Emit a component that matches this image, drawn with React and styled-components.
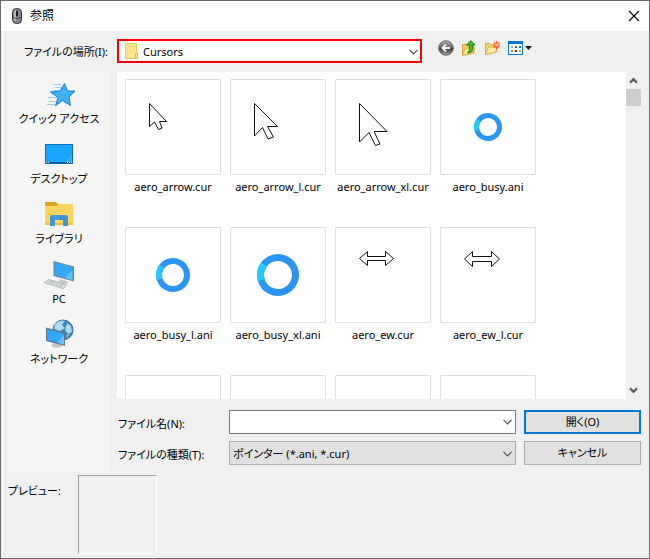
import React, { useState } from "react";
import styled, { createGlobalStyle } from "styled-components";

const GlobalStyle = createGlobalStyle`
  * {
    box-sizing: border-box;
  }

  body {
    margin: 0;
    background-color: #f0f0f0;
  }

  body,
  button,
  input,
  select {
    font-family: "Noto Sans", "Noto Sans CJK JP", sans-serif;
    font-size: 11px;
    font-feature-settings: "palt";
    color: #000;
  }

  svg {
    display: block;
    flex: none;
  }
`;

const Dialog = styled.div`
  display: flex;
  flex-direction: column;
  height: 100vh;
  border: 1px solid #6b696b;
  background-color: #f0f0f0;
  line-height: 16px;
`;

const TitleBar = styled.header`
  display: flex;
  align-items: center;
  gap: 5px;
  height: 30px;
  padding: 0 7px 0 8px;
  background-color: #fff;
`;

const Title = styled.h1`
  flex: 1;
  margin: 0;
  font-size: 12px;
  font-weight: 400;
`;

const IconButton = styled.button`
  display: flex;
  padding: 0;
  border: none;
  background: none;
`;

const Body = styled.main`
  flex: 1;
  min-height: 0;
  display: grid;
  grid-template-columns: 102px minmax(0, 1fr);
  grid-template-rows: 24px minmax(0, 1fr);
  gap: 9px 7px;
  padding: 8px 8px 0 7px;
`;

const LookInLabel = styled.label`
  align-self: center;
  padding: 2px 2px 0 0;
  text-align: right;
  white-space: nowrap;
`;

const LookInRow = styled.div`
  display: flex;
  gap: 16px;
`;

const ComboBox = styled.div`
  position: relative;
  flex: 1;
  display: flex;
  height: 24px;
`;

const Select = styled.select`
  appearance: none;
  width: 100%;
  height: 100%;
  padding: 0 20px 0 ${(props) => (props.$withIcon ? "24px" : "3px")};
  border: ${(props) => (props.$marked ? "2px solid #f00" : "1px solid #adadad")};
  border-radius: 0;
  background-color: ${(props) => (props.$marked ? "#fff" : "#e1e1e1")};
`;

const ComboIcon = styled.span`
  position: absolute;
  top: 4px;
  left: 6px;
  pointer-events: none;
`;

const ComboArrow = styled.span`
  position: absolute;
  top: 10px;
  right: 4px;
  pointer-events: none;
`;

const Toolbar = styled.div`
  display: flex;
  align-items: flex-start;
  gap: 7px;
  width: 203px;
  padding-top: 1px;
`;

const Places = styled.nav`
  display: flex;
  flex-direction: column;
  gap: 12px;
  padding-top: 7px;
  background-color: #f5f5f5;
`;

const Place = styled.button`
  display: flex;
  flex-direction: column;
  align-items: center;
  padding: 0;
  border: none;
  background: none;
  line-height: 16px;
  white-space: nowrap;
`;

const Content = styled.section`
  display: flex;
  flex-direction: column;
  gap: 11px;
  min-height: 0;
  padding-bottom: 6px;
`;

const FileView = styled.div`
  flex: 1;
  min-height: 0;
  display: flex;
`;

const FileGrid = styled.ul`
  flex: 1;
  display: grid;
  grid-template-columns: repeat(auto-fill, 96px);
  grid-auto-rows: 139px;
  gap: 9px;
  margin: 0;
  padding: 7px 8px 0;
  overflow: hidden;
  background-color: #fff;
  list-style: none;
`;

const FileItem = styled.li`
  display: flex;
  flex-direction: column;
  align-items: center;
  gap: 4px;
  white-space: nowrap;
`;

const Thumb = styled.div`
  flex: none;
  width: 96px;
  height: 96px;
  border: 1px solid #dfdfdf;
  border-radius: 1px;
`;

const ScrollBar = styled.div`
  display: flex;
  flex-direction: column;
  width: 15px;
`;

const ScrollButton = styled(IconButton)`
  align-items: center;
  justify-content: center;
  height: 17px;
`;

const ScrollTrack = styled.div`
  flex: 1;
`;

const ScrollThumb = styled.div`
  height: 17px;
  background-color: #cdcdcd;
`;

const Fields = styled.form`
  display: grid;
  grid-template-columns: 104px minmax(0, 1fr) 117px;
  grid-auto-rows: 24px;
  gap: 7px 8px;
  align-items: center;
`;

const FieldLabel = styled.label`
  padding: 3px 0 0 1px;
  white-space: nowrap;
`;

const FileNameBox = styled.div`
  display: flex;
  align-items: center;
  height: 24px;
  padding-right: 3px;
  border: 1px solid #7a7a7a;
  background-color: #fff;
`;

const FileNameInput = styled.input`
  flex: 1;
  min-width: 0;
  padding: 0 3px;
  border: none;
  outline: none;
  background: none;
`;

const PushButton = styled.button`
  height: 24px;
  padding: 0;
  border: ${(props) => (props.$primary ? "2px solid #0078d7" : "1px solid #adadad")};
  background-color: #e1e1e1;
  line-height: 16px;
`;

const PreviewRow = styled.div`
  display: flex;
  padding: 4px 7px 4px;
`;

const PreviewLabel = styled.span`
  width: 70px;
  padding-top: 8px;
`;

const PreviewBox = styled.div`
  width: 79px;
  height: 79px;
  border: 1px solid #a0a0a0;
  border-right-color: #fff;
  border-bottom-color: #fff;
`;

const MouseIcon = () => (
  <svg width="16" height="16" viewBox="0 0 16 16">
    <rect x="3.5" y="0.5" width="9" height="15" rx="4" fill="#85878a" stroke="#2c2e31" />
    <rect x="5" y="2" width="2" height="11" rx="1" fill="#b4b6b9" />
    <path d="M4 9.5q4 2 8 0" fill="none" stroke="#4a4c50" />
    <rect x="7" y="2.5" width="2" height="6" rx="1" fill="#1b1d20" />
  </svg>
);

const CloseIcon = () => (
  <svg width="16" height="16" viewBox="0 0 16 16">
    <path d="M3 3l10 10M13 3L3 13" stroke="#000" strokeWidth="1.1" />
  </svg>
);

const FolderIcon = () => (
  <svg width="16" height="16" viewBox="0 0 16 16">
    <path d="M2.5 0.5h11v10h1v5h-12z" fill="#ffe28a" stroke="#efc75a" />
    <path d="M12.5 15v-4.5h2V15z" fill="#ffe9a3" stroke="#e3b740" />
  </svg>
);

const ChevronIcon = () => (
  <svg width="9" height="6" viewBox="0 0 9 6">
    <path d="M0.5 0.8l4 4 4-4" fill="none" stroke="#505050" strokeWidth="1.2" />
  </svg>
);

const ScrollArrow = ({ down }) => (
  <svg width="9" height="7" viewBox="0 0 9 7">
    <path
      d={down ? "M1 1.2l3.5 3.6L8 1.2" : "M1 5.8l3.5-3.6L8 5.8"}
      fill="none"
      stroke="#5a5a5a"
      strokeWidth="2.2"
    />
  </svg>
);

const BackIcon = () => (
  <svg width="16" height="16" viewBox="0 0 16 16">
    <defs>
      <linearGradient id="back" x1="0" y1="0" x2="0" y2="1">
        <stop offset="0" stopColor="#b0b0b0" />
        <stop offset="0.45" stopColor="#6a6a6a" />
        <stop offset="0.55" stopColor="#3c3c3c" />
        <stop offset="1" stopColor="#a4a4a4" />
      </linearGradient>
    </defs>
    <circle cx="8" cy="8" r="7.3" fill="url(#back)" stroke="#6c6c6c" />
    <path d="M12 8H5M8 4.5L4.5 8 8 11.5" fill="none" stroke="#f4f4f4" strokeWidth="1.8" />
  </svg>
);

const UpFolderIcon = () => (
  <svg width="16" height="16" viewBox="0 0 16 16">
    <path d="M1.5 15V4.5h4l1 1.5H13v7z" fill="#f4cf62" stroke="#d5a233" />
    <path d="M1.5 15.3L4.5 8H14l-3 5.5z" fill="#ffe99b" stroke="#dbaa3a" />
    <path
      d="M6 12.8q2.5-0.5 2.5-4V5H5.5L9.8 0.6 14 5h-2.6v4q0 4.5-5.4 3.8z"
      fill="#43c51e"
      stroke="#1e7c16"
    />
  </svg>
);

const NewFolderIcon = () => (
  <svg width="16" height="16" viewBox="0 0 16 16">
    <path d="M1.5 14.5v-11h4L7 5h5.5v7z" fill="#f5d373" stroke="#d9a93e" />
    <path d="M1.5 14.5L4.5 7H14l-3 5.5z" fill="#ffeba6" stroke="#dfb04a" />
    <path
      d="M12.5 1v8M8.8 5h7.2M9.8 2.3l5.4 5.4M15.2 2.3L9.8 7.7"
      stroke="#f1542a"
      strokeWidth="1.2"
    />
    <circle cx="12.5" cy="5" r="1.4" fill="#ffd36b" />
  </svg>
);

const ViewMenuIcon = () => (
  <svg width="26" height="16" viewBox="0 0 26 16">
    <rect x="1.5" y="1.5" width="14" height="13" fill="#fff" stroke="#0078d7" />
    <rect x="1" y="1" width="15" height="3" fill="#0078d7" />
    <path d="M4 6h2v2H4z" fill="#9cacbf" />
    <path d="M8 6h2v2H8z" fill="#1e6eb8" />
    <path d="M12 6h2v2h-2z" fill="#2c7a4a" />
    <path d="M4 10h2v2H4z" fill="#e8623a" />
    <path d="M8 10h2v2H8z" fill="#173f94" />
    <path d="M12 10h2v2h-2z" fill="#e0a030" />
    <path d="M18 6h7l-3.5 4z" fill="#1c1c2c" />
  </svg>
);

const QuickAccessIcon = () => (
  <svg width="32" height="32" viewBox="0 0 32 32">
    <path
      d="M10 5.5h8M12 8.5h6M11 11.5h5M5 18.5h9M6 22.5h7M4 25.5h8"
      stroke="#8cc5ec"
      strokeWidth="0.9"
    />
    <path
      d="M21.5 4.5l3 7.5H32l-6 6 1.5 8.5-8-5-7 5.3L15 18.5 7.5 13 17 12z"
      fill="#3db2fb"
      stroke="#1b7dc7"
    />
  </svg>
);

const DesktopIcon = () => (
  <svg width="32" height="32" viewBox="0 0 32 32">
    <rect x="2.5" y="5.5" width="27" height="19" fill="#1ca5ff" stroke="#0c6bb3" />
    <path d="M22 23l7-8v8z" fill="#35afff" />
    <path d="M3 23.5h26" stroke="#0b5b9c" />
    <path d="M3 23.5h3M24 23.5h5" stroke="#fff" strokeDasharray="1 1" />
  </svg>
);

const LibraryIcon = () => (
  <svg width="32" height="32" viewBox="0 0 32 32">
    <path d="M2 3h11l2 2h15v7H2z" fill="#daa521" />
    <path d="M2 7h12l2-2h14v21H2z" fill="#ffd55e" />
    <path d="M2 24h28v2H2z" fill="#f3c13c" />
    <path d="M7 27V18q0-2 2-2h14q2 0 2 2v9h-5v-6h-8v6z" fill="#3f94da" />
  </svg>
);

const PcIcon = () => (
  <svg width="32" height="32" viewBox="0 0 32 32">
    <path d="M17 20l6 2 3 2-6 1.5-5-2z" fill="#c5c9cc" />
    <path d="M10.5 2L31 7.5v15L10.5 17z" fill="#777f86" />
    <path d="M11.5 3.3L29.5 8v13l-18-4.8z" fill="#31a8fa" />
    <path d="M22 19.2L29.5 11v10z" fill="#65c2ff" />
    <path d="M1 23.5l5-3 18 5.5-4 3.5z" fill="#e2e4e5" stroke="#a8acaf" strokeWidth="0.8" />
    <path
      d="M4 23l15 4.5M6 21.8l15 4.5M7 25.2l4-2.8M12 26.5l4-2.8M16 27.7l4-2.6"
      stroke="#b6babd"
      strokeWidth="0.7"
    />
  </svg>
);

const NetworkIcon = () => (
  <svg width="32" height="32" viewBox="0 0 32 32">
    <circle cx="20" cy="11" r="10" fill="#3686b9" stroke="#2c6f9f" />
    <path d="M12 5q5-5 10-3l-3 4 3 3-5 3-6-2zM24 4l4 3 1 6-4 2-3-4z" fill="#a9daed" />
    <path d="M23 16l4-1-3 4z" fill="#7fc0df" />
    <path d="M10 24l8 2 1 2-6 1-5-2z" fill="#c5c9cc" />
    <path d="M3 8.5l19 5.3V27L3 22z" fill="#69747d" />
    <path d="M4 10l17 4.8v10.7L4 21z" fill="#31a8fa" />
    <path d="M14 23.5l7-7v9z" fill="#65c2ff" />
  </svg>
);

const CursorShape = ({ points }) => (
  <svg width="94" height="94" viewBox="1 1 94 94">
    <polygon points={points} fill="#fff" stroke="#111" />
  </svg>
);

const BusyRing = ({ radius, width }) => {
  const length = 2 * Math.PI * radius;
  return (
    <svg width="94" height="94" viewBox="1 1 94 94">
      <g fill="none" strokeWidth={width} transform="rotate(163 48 48)">
        <circle cx="48" cy="48" r={radius} stroke="#2b95f3" />
        <circle
          cx="48"
          cy="48"
          r={radius}
          stroke="#26c9ff"
          strokeDasharray={`${length * 0.15} ${length}`}
        />
      </g>
    </svg>
  );
};

const places = [
  { name: "クイック アクセス", icon: <QuickAccessIcon /> },
  { name: "デスクトップ", icon: <DesktopIcon /> },
  { name: "ライブラリ", icon: <LibraryIcon /> },
  { name: "PC", icon: <PcIcon /> },
  { name: "ネットワーク", icon: <NetworkIcon /> },
];

const files = [
  {
    name: "aero_arrow.cur",
    icon: (
      <CursorShape points="24.5,24.5 24.5,47.5 29.5,43 33.5,50.5 37,49 34.5,42.5 41.5,42.5" />
    ),
  },
  {
    name: "aero_arrow_l.cur",
    icon: <CursorShape points="24.5,24.5 24.5,57 32.5,48.5 38,60 43.5,58 37.5,47.5 47.5,47.5" />,
  },
  {
    name: "aero_arrow_xl.cur",
    icon: <CursorShape points="24.5,24.5 24.5,63 34,53.5 40.5,66.5 45,65 39,52.5 52,52.5" />,
  },
  { name: "aero_busy.ani", icon: <BusyRing radius={11.5} width={5} /> },
  { name: "aero_busy_l.ani", icon: <BusyRing radius={14} width={6} /> },
  { name: "aero_busy_xl.ani", icon: <BusyRing radius={17.5} width={7} /> },
  {
    name: "aero_ew.cur",
    icon: (
      <CursorShape points="24.5,31.5 32.5,24.5 32.5,29.5 50.5,29.5 50.5,24.5 58.5,31.5 50.5,38.5 50.5,33.5 32.5,33.5 32.5,38.5" />
    ),
  },
  {
    name: "aero_ew_l.cur",
    icon: (
      <CursorShape points="24.5,32 32.5,24.5 32.5,29.5 51.5,29.5 51.5,24.5 59.5,32 51.5,39.5 51.5,34.5 32.5,34.5 32.5,39.5" />
    ),
  },
  { name: "" },
  { name: "" },
  { name: "" },
  { name: "" },
];

const App = () => {
  const [fileName, setFileName] = useState("");

  return (
    <>
      <GlobalStyle />
      <Dialog role="dialog" aria-labelledby="title">
        <TitleBar>
          <MouseIcon />
          <Title id="title">参照</Title>
          <IconButton aria-label="閉じる">
            <CloseIcon />
          </IconButton>
        </TitleBar>

        <Body>
          <LookInLabel htmlFor="lookIn">ファイルの場所(I):</LookInLabel>
          <LookInRow>
            <ComboBox>
              <Select id="lookIn" $withIcon $marked>
                <option>Cursors</option>
              </Select>
              <ComboIcon>
                <FolderIcon />
              </ComboIcon>
              <ComboArrow>
                <ChevronIcon />
              </ComboArrow>
            </ComboBox>
            <Toolbar>
              <IconButton aria-label="戻る">
                <BackIcon />
              </IconButton>
              <IconButton aria-label="上へ">
                <UpFolderIcon />
              </IconButton>
              <IconButton aria-label="新しいフォルダー">
                <NewFolderIcon />
              </IconButton>
              <IconButton aria-label="表示">
                <ViewMenuIcon />
              </IconButton>
            </Toolbar>
          </LookInRow>

          <Places>
            {places.map((place) => (
              <Place key={place.name}>
                {place.icon}
                {place.name}
              </Place>
            ))}
          </Places>

          <Content>
            <FileView>
              <FileGrid>
                {files.map((file, i) => (
                  <FileItem key={i}>
                    <Thumb>{file.icon}</Thumb>
                    {file.name}
                  </FileItem>
                ))}
              </FileGrid>
              <ScrollBar>
                <ScrollButton aria-label="上にスクロール">
                  <ScrollArrow />
                </ScrollButton>
                <ScrollTrack>
                  <ScrollThumb />
                </ScrollTrack>
                <ScrollButton aria-label="下にスクロール">
                  <ScrollArrow down />
                </ScrollButton>
              </ScrollBar>
            </FileView>

            <Fields onSubmit={(e) => e.preventDefault()}>
              <FieldLabel htmlFor="fileName">ファイル名(N):</FieldLabel>
              <FileNameBox>
                <FileNameInput
                  id="fileName"
                  type="text"
                  value={fileName}
                  onChange={(e) => setFileName(e.target.value)}
                />
                <IconButton type="button" aria-label="履歴">
                  <ChevronIcon />
                </IconButton>
              </FileNameBox>
              <PushButton type="submit" $primary>
                開く(O)
              </PushButton>

              <FieldLabel htmlFor="fileType">ファイルの種類(T):</FieldLabel>
              <ComboBox>
                <Select id="fileType">
                  <option>ポインター (*.ani, *.cur)</option>
                </Select>
                <ComboArrow>
                  <ChevronIcon />
                </ComboArrow>
              </ComboBox>
              <PushButton type="button">キャンセル</PushButton>
            </Fields>
          </Content>
        </Body>

        <PreviewRow>
          <PreviewLabel>プレビュー:</PreviewLabel>
          <PreviewBox />
        </PreviewRow>
      </Dialog>
    </>
  );
};

export default App;
